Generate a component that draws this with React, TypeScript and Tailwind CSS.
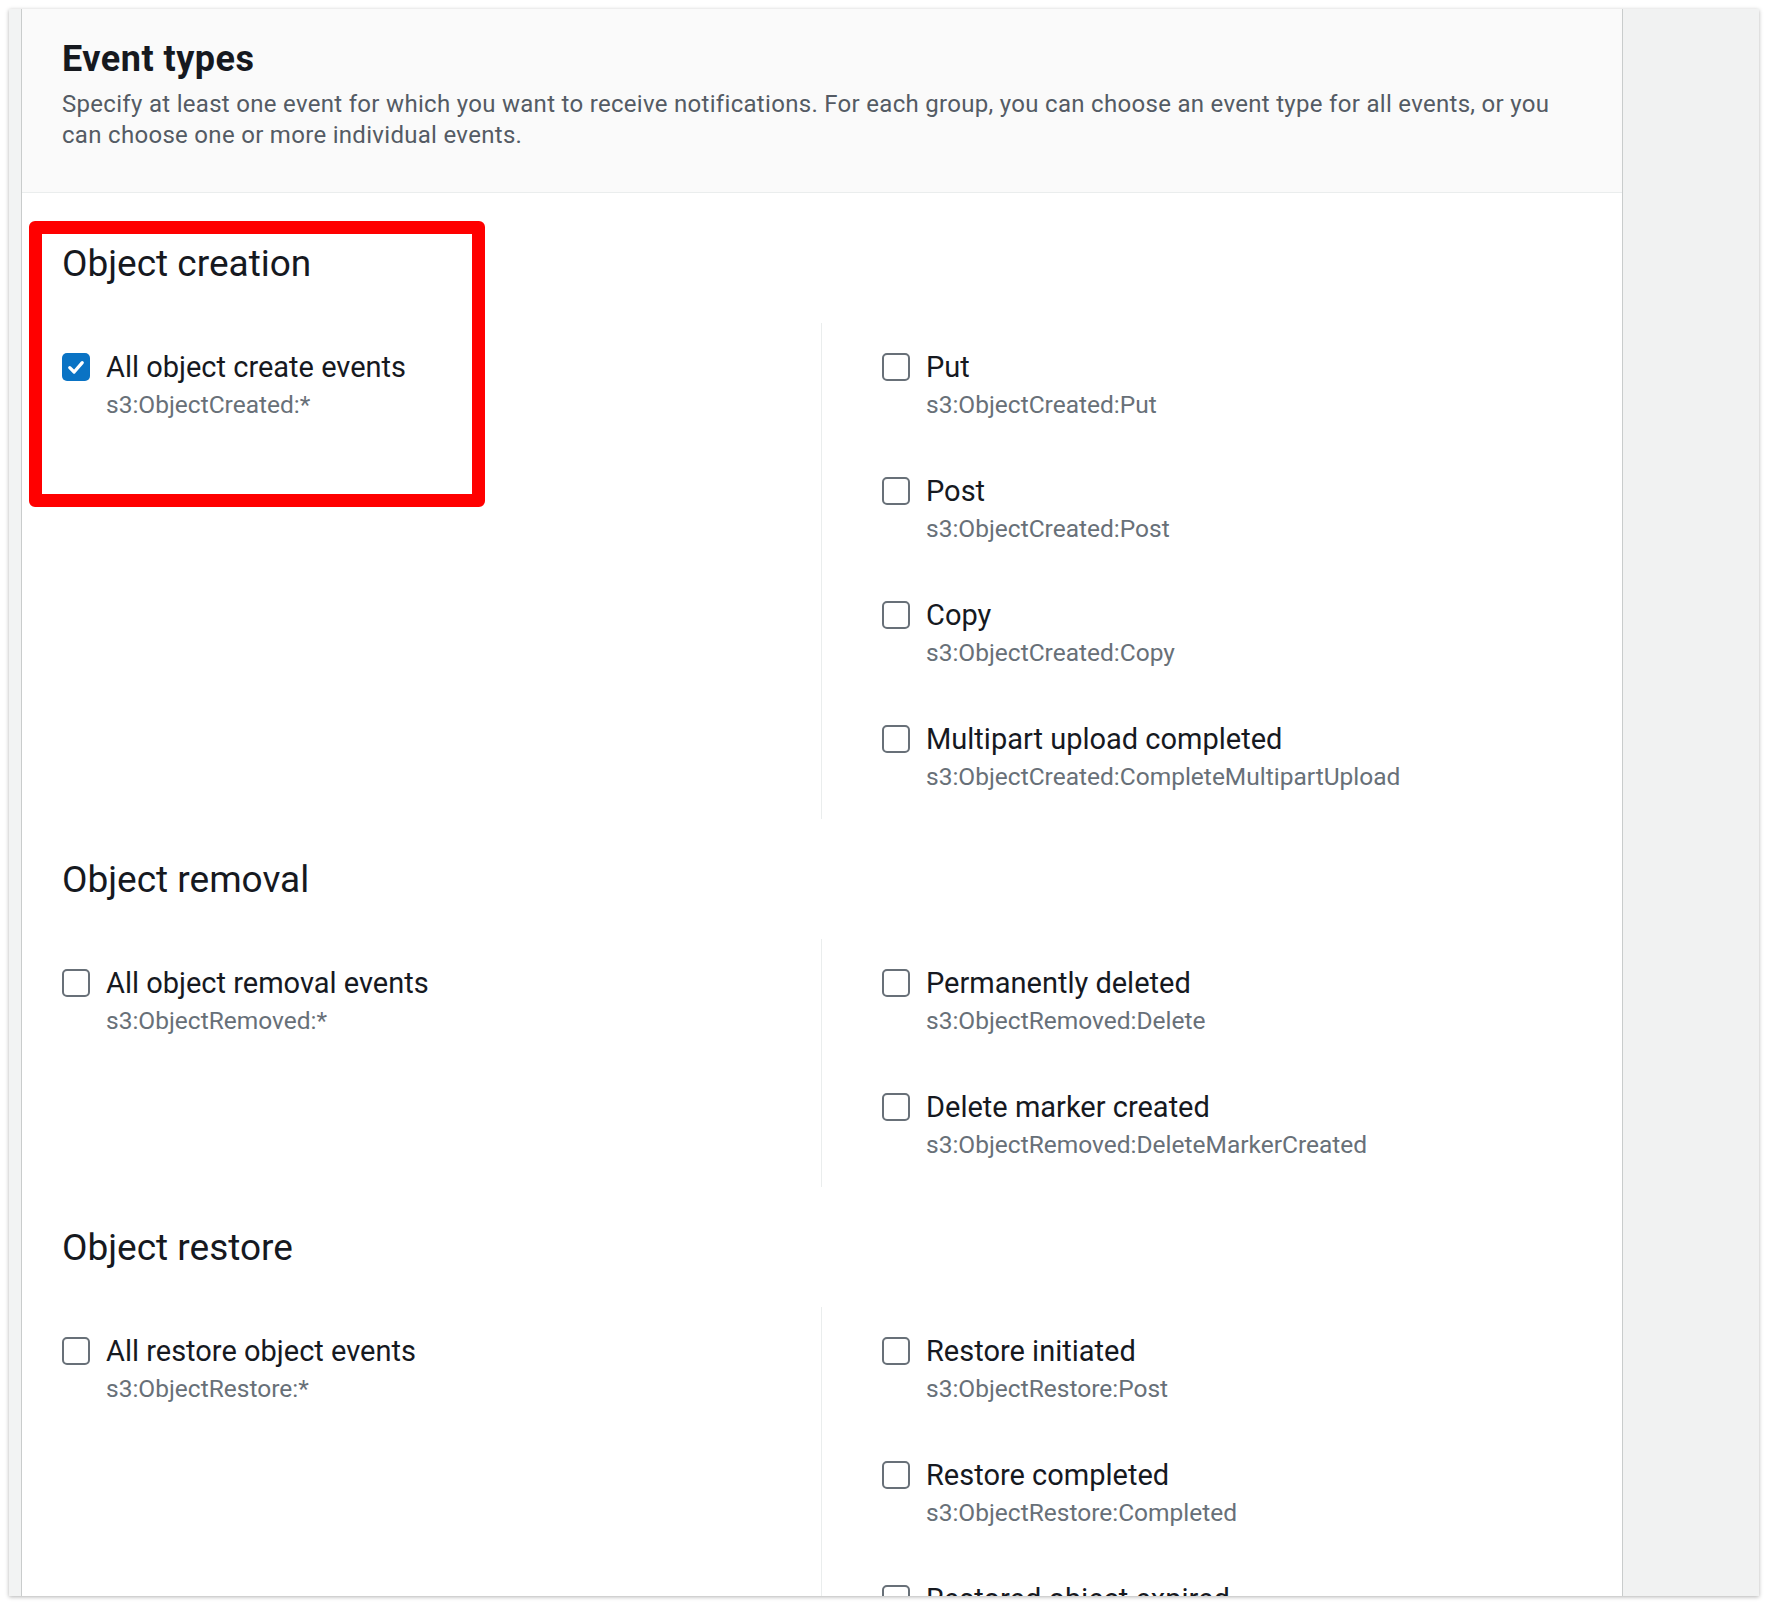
import React from 'react';

type EventItem = {
  label: string;
  code: string;
  checked?: boolean;
};

type EventGroup = {
  title: string;
  all: EventItem;
  items: EventItem[];
};

const groups: EventGroup[] = [
  {
    title: 'Object creation',
    all: { label: 'All object create events', code: 's3:ObjectCreated:*', checked: true },
    items: [
      { label: 'Put', code: 's3:ObjectCreated:Put' },
      { label: 'Post', code: 's3:ObjectCreated:Post' },
      { label: 'Copy', code: 's3:ObjectCreated:Copy' },
      { label: 'Multipart upload completed', code: 's3:ObjectCreated:CompleteMultipartUpload' },
    ],
  },
  {
    title: 'Object removal',
    all: { label: 'All object removal events', code: 's3:ObjectRemoved:*' },
    items: [
      { label: 'Permanently deleted', code: 's3:ObjectRemoved:Delete' },
      { label: 'Delete marker created', code: 's3:ObjectRemoved:DeleteMarkerCreated' },
    ],
  },
  {
    title: 'Object restore',
    all: { label: 'All restore object events', code: 's3:ObjectRestore:*' },
    items: [
      { label: 'Restore initiated', code: 's3:ObjectRestore:Post' },
      { label: 'Restore completed', code: 's3:ObjectRestore:Completed' },
      { label: 'Restored object expired', code: 's3:LifecycleExpiration:Delete' },
    ],
  },
];

function Checkbox({ checked }: { checked?: boolean }) {
  if (checked) {
    return (
      <span className="mt-[6px] flex h-[28px] w-[28px] shrink-0 items-center justify-center rounded-[5px] bg-[#0a73c4]">
        <svg viewBox="0 0 16 16" className="h-[20px] w-[20px]" fill="none" stroke="white" strokeWidth="2.6" strokeLinecap="round" strokeLinejoin="round">
          <polyline points="3 8.5 6.5 12 13 4.5" />
        </svg>
      </span>
    );
  }
  return <span className="mt-[6px] h-[28px] w-[28px] shrink-0 rounded-[5px] border-2 border-[#687078] bg-white" />;
}

function EventOption({ item }: { item: EventItem }) {
  return (
    <div>
      <div className="flex gap-[16px]">
        <Checkbox checked={item.checked} />
        <span className="text-[29px] leading-[40px] text-[#16191f]">{item.label}</span>
      </div>
      <div className="pl-[44px] text-[24.5px] leading-[36px] text-[#687078]">{item.code}</div>
    </div>
  );
}

function Group({ group }: { group: EventGroup }) {
  return (
    <section>
      <h3 className="text-[37px] leading-[44px] text-[#16191f]">{group.title}</h3>
      <div className="mt-[37px] grid grid-cols-[759px_1fr]">
        <div className="py-6">
          <EventOption item={group.all} />
        </div>
        <div className="flex flex-col gap-[48px] border-l border-[#eaeded] py-6 pl-[60px]">
          {group.items.map((item) => (
            <EventOption key={item.code} item={item} />
          ))}
        </div>
      </div>
    </section>
  );
}

export default function App() {
  return (
    <div className="h-[1606px] w-[1768px] bg-white p-[9px]" style={{ fontFamily: 'Roboto, "Liberation Sans", sans-serif' }}>
      <div className="flex h-[1587px] overflow-hidden shadow-[0_1px_4px_rgba(0,0,0,0.3)]">
        {/* left gutter */}
        <div className="w-[12px] shrink-0 bg-[#f2f3f3]" />

        {/* main panel */}
        <div className="w-[1602px] shrink-0 border-x border-[#c9cccc] bg-white">
          <div className="border-b border-[#eaeded] bg-[#fafafa] px-[40px] pt-[30px] pb-[41px]">
            <h2 className="text-[36px] font-bold leading-[40px] tracking-[0.5px] text-[#16191f]">Event types</h2>
            <p className="mt-[10px] text-[24px] leading-[31px] tracking-[0.3px] text-[#545b64]">
              Specify at least one event for which you want to receive notifications. For each group, you can choose an event type for all events, or you can choose one or more individual events.
            </p>
          </div>

          <div className="relative flex flex-col gap-[39px] px-[40px] pt-[49px]">
            {groups.map((g) => (
              <Group key={g.title} group={g} />
            ))}

            {/* annotation box */}
            <div className="absolute left-[7px] top-[28px] h-[286px] w-[456px] rounded-[6px] border-[13px] border-[#ff0000]" />
          </div>
        </div>

        {/* right gutter */}
        <div className="flex-1 bg-[#f1f2f2]" />
      </div>
    </div>
  );
}
